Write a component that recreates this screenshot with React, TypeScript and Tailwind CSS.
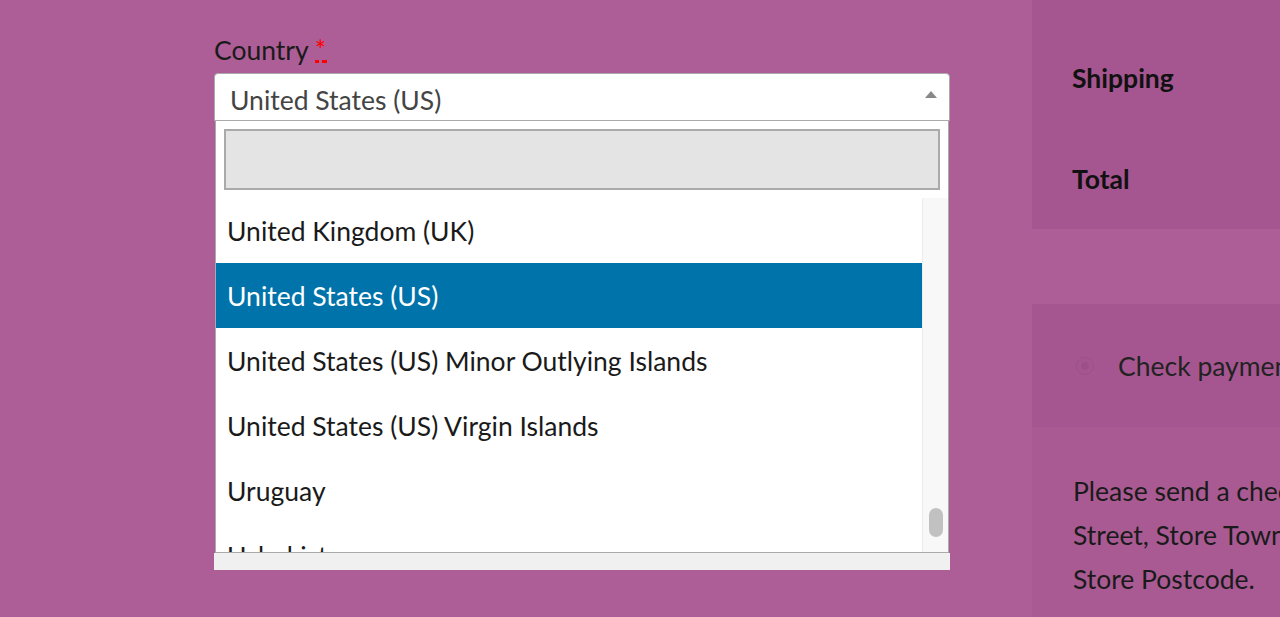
import {useState} from "react";

const countries = [
    "United Kingdom (UK)",
    "United States (US)",
    "United States (US) Minor Outlying Islands",
    "United States (US) Virgin Islands",
    "Uruguay",
    "Uzbekistan",
];

export default function App() {
    const [selected, setSelected] = useState("United States (US)");

    return (
        <div
            className="w-[1280px] h-[617px] overflow-hidden bg-[#ad5e96] flex text-[26.5px] text-[#1a1a1a]"
            style={{fontFamily: "Lato, 'Open Sans', sans-serif"}}
        >
            {/* billing form column */}
            <div className="w-[736px] ml-[214px] shrink-0 flex flex-col pt-[31px]">
                <label className="leading-[38px] h-[42px] shrink-0">
                    Country{" "}
                    <abbr className="relative inline-block text-[#ff0000] no-underline">
                        *
                        {/* dotted abbr underline */}
                        <span className="absolute left-[0px] top-[29px] flex gap-[3px]">
                            <span className="w-[4px] h-[3px] bg-[#ff0000]"/>
                            <span className="w-[5px] h-[3px] bg-[#ff0000]"/>
                        </span>
                    </abbr>
                </label>

                <div className="shrink-0 h-[48px] bg-white border border-[#aaa] rounded-t-[4px] flex items-center justify-between pl-[15px] pr-[12px] pt-[7px]">
                    <span className="text-[#444]">{selected}</span>
                    <svg width="12" height="7" viewBox="0 0 12 7" className="mt-[-12px]">
                        <polygon points="6,0 12,7 0,7" fill="#888"/>
                    </svg>
                </div>

                <div className="shrink-0 mx-[1px] bg-white border border-t-0 border-[#aaa] flex flex-col">
                    <div className="p-[8px] pb-[8px]">
                        <div className="h-[61px] bg-[#e4e4e4] border-2 border-[#aaa]"/>
                    </div>
                    <div className="flex h-[354px] overflow-hidden">
                        <ul className="flex-1 flex flex-col">
                            {countries.map((c) => (
                                <li
                                    key={c}
                                    onClick={() => setSelected(c)}
                                    className={
                                        "shrink-0 h-[65px] flex items-center px-[11px] pt-[2px] cursor-pointer " +
                                        (c === selected ? "bg-[#0073aa] text-white" : "text-[#1a1a1a]")
                                    }
                                >
                                    {c}
                                </li>
                            ))}
                        </ul>
                        <div className="w-[26px] bg-[#f8f8f8] border-l border-[#ececec] relative">
                            <div className="absolute left-[6px] top-[310px] w-[14px] h-[29px] rounded-[7px] bg-[#c1c1c1]"/>
                        </div>
                    </div>
                </div>
                <div className="shrink-0 h-[17px] bg-[#f0f0f0]"/>
            </div>

            {/* order review column */}
            <div className="ml-[82px] w-[480px] shrink-0 flex flex-col bg-[#a95a93]">
                <div className="shrink-0 h-[229px] bg-[#a55690] flex flex-col pl-[40px] pt-[60px] gap-[65px] font-bold text-[#111]">
                    <span className="leading-[36px]">Shipping</span>
                    <span className="leading-[36px]">Total</span>
                </div>
                <div className="shrink-0 h-[75px] bg-[#ad5e96]"/>
                <div className="shrink-0 h-[123px] bg-[#a55690] flex items-center pl-[44px] gap-[24px]">
                    <span className="w-[18px] h-[18px] rounded-full border border-[#9d5087] flex items-center justify-center">
                        <span className="w-[8px] h-[8px] rounded-full bg-[#9d5087]"/>
                    </span>
                    <span className="text-[#222] pt-[2px]">Check payments</span>
                </div>
                <p className="shrink-0 pl-[41px] pt-[42px] leading-[44px] text-[#1a1a1a] whitespace-nowrap">
                    Please send a check to Store Name, Store<br/>
                    Street, Store Town, Store State / County,<br/>
                    Store Postcode.
                </p>
            </div>
        </div>
    );
}
